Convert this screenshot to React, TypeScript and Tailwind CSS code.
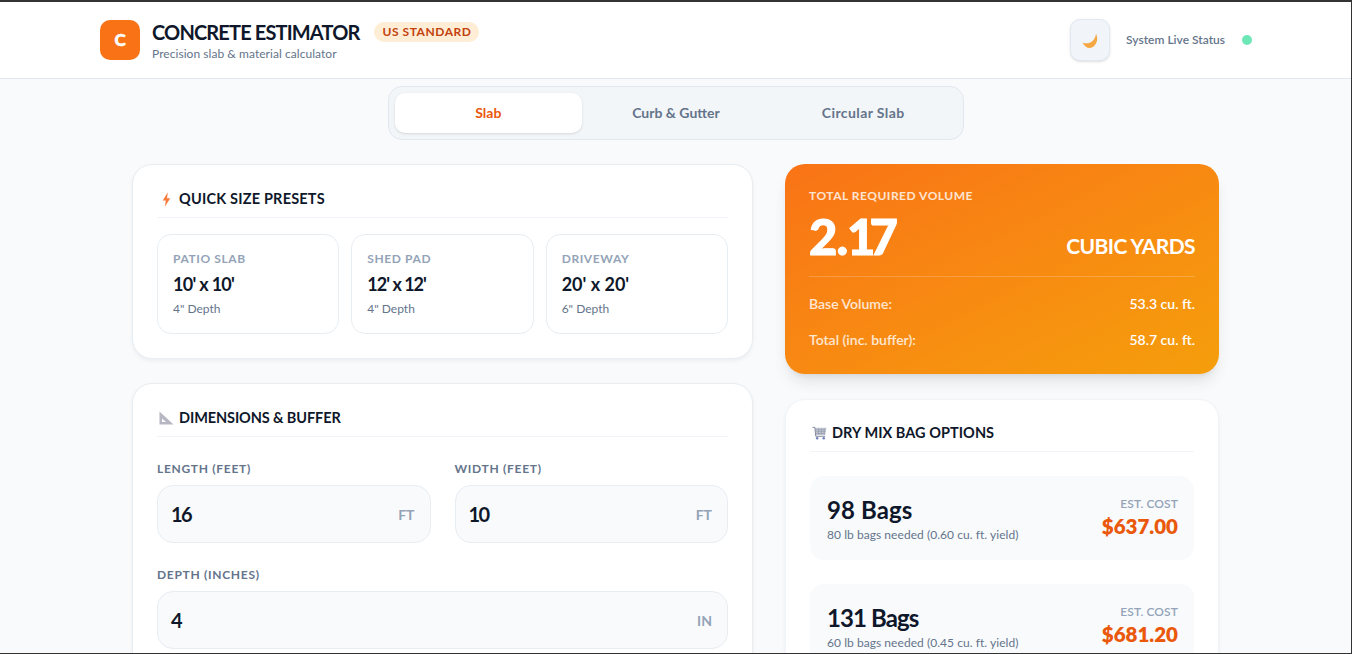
import React from 'react';

const font = { fontFamily: '"Lato", "Noto Sans", sans-serif' };

const presets = [
  { name: 'PATIO SLAB', size: "10' x 10'", depth: '4" Depth', fit: 'tracking-[-0.7px]' },
  { name: 'SHED PAD', size: "12' x 12'", depth: '4" Depth', fit: 'tracking-[-1px]' },
  { name: 'DRIVEWAY', size: "20' x 20'", depth: '6" Depth', fit: 'tracking-[0px]' },
];

const bags = [
  { count: '98 Bags', desc: '80 lb bags needed (0.60 cu. ft. yield)', cost: '$637.00', fit: 'tracking-[0.1px]' },
  { count: '131 Bags', desc: '60 lb bags needed (0.45 cu. ft. yield)', cost: '$681.20', fit: 'tracking-[-0.9px]' },
];

const Bolt = () => (
  <svg width="9" height="15" viewBox="0 0 10 16" className="shrink-0">
    <path d="M6.5 0 L0.8 9.2 H4.2 L3.2 16 L9.2 6.5 H5.6 Z" fill="#f97b3d" />
  </svg>
);

const Ruler = () => (
  <svg width="15" height="14" viewBox="0 0 16 14" className="shrink-0">
    <path fillRule="evenodd" d="M0.5 0 L15.5 13.8 H0.5 Z M3.2 7.5 V11.3 H7.5 Z" fill="#b7b7c4" />
  </svg>
);

const Cart = () => (
  <svg width="15" height="14" viewBox="0 0 16 14" className="ml-[1px] shrink-0">
    <path d="M3 1.5 H15.5 L14 9 H4 Z" fill="#c3c8d4" />
    <path d="M0.5 1 H3 L4 10.5 H14" fill="none" stroke="#7b8294" strokeWidth="1" />
    <path d="M4 3.5 H14.5 M4 5.5 H14.5 M4 7.5 H14 M7 2 V9 M10 2 V9 M13 2 V9" stroke="#8d94a6" strokeWidth="0.6" />
    <circle cx="5.5" cy="12.5" r="1.3" fill="#6f7fc0" />
    <circle cx="12.5" cy="12.5" r="1.3" fill="#6f7fc0" />
  </svg>
);

const Moon = () => (
  <svg width="16" height="16" viewBox="0 0 16 16" className="mt-[1px]">
    <path d="M14 0.5 C16.5 6 15 12 10 14.5 C6.5 16 2.5 14 0.5 9.5 C4 11 8 10.5 10.5 8 C12.5 6 13.8 3.5 14 0.5 Z" fill="#f5a742" />
  </svg>
);

const SectionTitle = ({ icon, title, fit }: { icon: React.ReactNode; title: string; fit: string }) => (
  <div className="flex h-[29px] items-start gap-[4px] border-b border-[#f1f5f9]">
    <div className="flex h-[20px] w-[18px] items-center justify-center">{icon}</div>
    <h3 className={`text-[14.5px] leading-[20px] font-bold text-[#0f172a] ${fit}`}>{title}</h3>
  </div>
);

const Field = ({ label, value, unit }: { label: string; value: string; unit: string }) => (
  <div>
    <label className="mb-[8px] block text-[12px] leading-[17px] font-bold tracking-[0.7px] text-[#64748b]">{label}</label>
    <div className="flex h-[58px] items-center justify-between rounded-[16px] border border-[#e8edf2] bg-[#f8fafc] pr-[15px] pl-[13px]">
      <span className="text-[20px] font-bold tracking-[-1.5px] text-[#0f172a]">{value}</span>
      <span className="text-[14px] font-bold text-[#94a3b8]">{unit}</span>
    </div>
  </div>
);

export default function App() {
  return (
    <div style={font} className="h-[654px] overflow-hidden border-t-2 border-r border-b border-[#333333] bg-[#f8fafc]">
      <header className="h-[77px] border-b border-[#e2e8f0] bg-white">
        <div className="ml-[100px] flex h-full w-[1152px] items-center justify-between">
          <div className="flex items-center gap-[12px]">
            <div className="flex h-[40px] w-[40px] items-center justify-center rounded-[10px] bg-[#f97316] text-[17px] font-black text-white [-webkit-text-stroke:0.5px_white]">C</div>
            <div>
              <div className="flex items-center gap-[15px]">
                <h1 className="text-[20px] leading-[26px] font-bold tracking-[-0.85px] text-[#0f172a]">CONCRETE ESTIMATOR</h1>
                <span className="rounded-full bg-[#ffedd5] px-[8px] text-[12px] leading-[20px] font-bold tracking-[0.55px] text-[#c2410c]">US STANDARD</span>
              </div>
              <p className="text-[12px] leading-[17px] tracking-[0.05px] text-[#64748b]">Precision slab &amp; material calculator</p>
            </div>
          </div>
          <div className="flex items-center">
            <button className="flex h-[42px] w-[40px] items-center justify-center rounded-[10px] border border-[#e2e8f0] bg-[#f1f5f9] shadow-sm">
              <Moon />
            </button>
            <span className="ml-[16px] text-[12px] font-semibold text-[#64748b]">System Live Status</span>
            <span className="ml-[17px] h-[10px] w-[10px] rounded-full bg-[#6ee7b7]" />
          </div>
        </div>
      </header>

      <nav className="mx-auto mt-[7px] flex h-[54px] w-[576px] gap-[2px] rounded-[14px] border border-[#e2e8f0] bg-[#f3f6f9] p-[6px]">
        <div className="flex w-[188px] items-center justify-center rounded-[10px] bg-white pb-[2px] text-[14px] font-bold text-[#ea580c] shadow-sm">Slab</div>
        <div className="flex w-[184px] items-center justify-center pb-[2px] text-[14px] font-bold text-[#64748b]">Curb &amp; Gutter</div>
        <div className="flex w-[187px] items-center justify-center pb-[2px] text-[14px] font-bold tracking-[0.4px] text-[#64748b]">Circular Slab</div>
      </nav>

      <main className="ml-[132px] mt-[24px] grid w-[1087px] grid-cols-[621px_434px] gap-[32px]">
        <div className="flex flex-col gap-[24px]">
          <section className="rounded-[20px] border border-[#e8edf2] bg-white p-[24px] shadow-[0_2px_4px_rgba(15,23,42,0.05)]">
            <SectionTitle icon={<Bolt />} title="QUICK SIZE PRESETS" fit="tracking-[0.2px]" />
            <div className="mt-[16px] grid grid-cols-3 gap-[12px]">
              {presets.map((p) => (
                <div key={p.name} className="h-[100px] rounded-[14px] border border-[#e8edf2] bg-white px-[15px] pt-[15px]">
                  <div className="text-[12px] leading-[17px] font-bold tracking-[0.6px] text-[#94a3b8]">{p.name}</div>
                  <div className={`mt-[5px] text-[18px] leading-[25px] font-bold text-[#0f172a] ${p.fit}`}>{p.size}</div>
                  <div className="mt-[3px] text-[12px] leading-[17px] text-[#64748b]">{p.depth}</div>
                </div>
              ))}
            </div>
          </section>

          <section className="rounded-[20px] border border-[#e8edf2] bg-white p-[24px] shadow-[0_2px_4px_rgba(15,23,42,0.05)]">
            <SectionTitle icon={<Ruler />} title="DIMENSIONS & BUFFER" fit="tracking-[-0.1px]" />
            <div className="mt-[23px] grid grid-cols-2 gap-x-[24px] gap-y-[23px]">
              <Field label="LENGTH (FEET)" value="16" unit="FT" />
              <Field label="WIDTH (FEET)" value="10" unit="FT" />
              <div className="col-span-2">
                <Field label="DEPTH (INCHES)" value="4" unit="IN" />
              </div>
            </div>
          </section>
        </div>

        <div className="flex flex-col gap-[25px]">
          <section className="h-[210px] rounded-[20px] bg-gradient-to-br from-[#f97316] to-[#f59e0b] px-[24px] pt-[24px] text-white shadow-lg">
            <div className="text-[12px] leading-[16px] font-bold tracking-[0.5px] text-white/80">TOTAL REQUIRED VOLUME</div>
            <div className="mt-[2px] flex h-[56px] items-end justify-between">
              <span className="text-[49px] leading-[52px] font-black [-webkit-text-stroke:1px_white]">
                <span className="tracking-[-1px]">2.</span>
                <span className="tracking-[-6px]">17</span>
              </span>
              <span className="pb-[2px] text-[21px] leading-[28px] font-bold tracking-[-0.6px]">CUBIC YARDS</span>
            </div>
            <div className="mt-[14px] border-t border-white/20 pt-[18px]">
              <div className="flex justify-between text-[14px] leading-[18px] font-semibold">
                <span className="text-white/80">Base Volume:</span>
                <span>53.3 cu. ft.</span>
              </div>
              <div className="mt-[18px] flex justify-between text-[14px] leading-[18px] font-semibold">
                <span className="text-white/80">Total (inc. buffer):</span>
                <span>58.7 cu. ft.</span>
              </div>
            </div>
          </section>

          <section className="rounded-[20px] border border-[#f1f5f9] bg-white p-[24px] pt-[23px] shadow-[0_2px_4px_rgba(15,23,42,0.05)]">
            <SectionTitle icon={<Cart />} title="DRY MIX BAG OPTIONS" fit="tracking-[0.05px]" />
            <div className="mt-[24px] flex flex-col gap-[24px]">
              {bags.map((b) => (
                <div key={b.count} className="flex h-[84px] items-center justify-between rounded-[14px] bg-[#f8fafc] pr-[16px] pl-[17px]">
                  <div className="pt-[2px]">
                    <div className={`text-[24px] leading-[30px] font-bold text-[#0f172a] ${b.fit}`}>{b.count}</div>
                    <div className="mt-[1px] text-[12px] leading-[17px] tracking-[0.05px] text-[#64748b]">{b.desc}</div>
                  </div>
                  <div className="text-right">
                    <div className="text-[12px] leading-[16px] font-semibold tracking-[0.1px] text-[#94a3b8]">EST. COST</div>
                    <div className="text-[20.5px] leading-[28px] font-extrabold text-[#ea580c]">{b.cost}</div>
                  </div>
                </div>
              ))}
            </div>
          </section>
        </div>
      </main>
    </div>
  );
}
